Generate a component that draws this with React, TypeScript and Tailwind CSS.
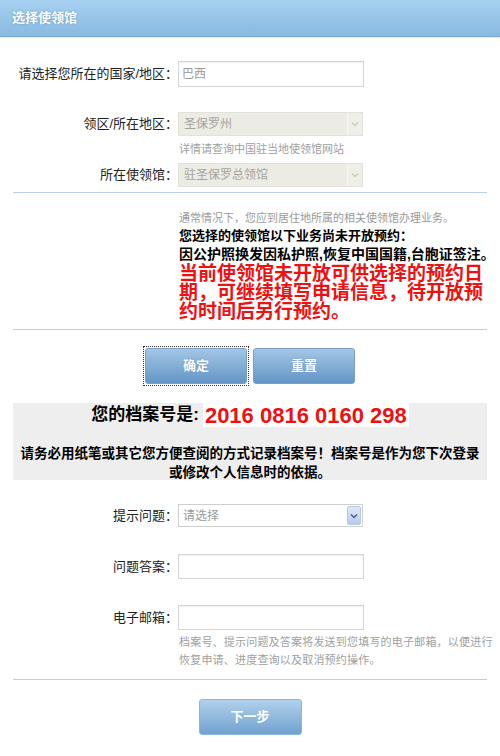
import React from "react";

const cjk = "font-['Liberation_Sans','Noto_Sans_CJK_SC',sans-serif]";

function Chevron({ color }: { color: string }) {
  return (
    <svg width="8" height="6" viewBox="0 0 8 6">
      <path d="M1 1.5 L4 4.5 L7 1.5" fill="none" stroke={color} strokeWidth="1.5" />
    </svg>
  );
}

function Row({ label, children, className = "" }: { label: string; children: React.ReactNode; className?: string }) {
  return (
    <div className={`flex items-center ${className}`}>
      <div className="w-[178px] text-right text-[13px] text-[#222]">{label}</div>
      {children}
    </div>
  );
}

function DisabledSelect({ value }: { value: string }) {
  return (
    <div className="w-[185px] h-[24px] flex items-center bg-[#ecebe4] border border-[#e2e2dc]">
      <span className="flex-1 pl-[5px] text-[12px] text-[#a5a5a0]">{value}</span>
      <div className="w-[15px] h-full flex items-center justify-center border-l border-[#f6f6f2] bg-[#efeee8]">
        <Chevron color="#c9c9c4" />
      </div>
    </div>
  );
}

function Btn({ label, focus = false }: { label: string; focus?: boolean }) {
  return (
    <div className={focus ? "outline-1 outline-dotted outline-[#333] outline-offset-[1px]" : ""}>
      <button className="w-[102px] h-[36px] rounded-[3px] border border-[#789fc6] bg-gradient-to-b from-[#a3c7e5] to-[#6495c6] text-white text-[13px] font-bold [text-shadow:0_0_1px_rgba(40,80,130,0.5)]">
        {label}
      </button>
    </div>
  );
}

export default function App() {
  return (
    <div className={`w-[500px] min-h-[756px] bg-white ${cjk}`}>
      {/* header */}
      <div className="h-[37px] flex items-center pl-[12px] bg-gradient-to-b from-[#a8d2f1] to-[#89b8e0] border-b border-[#80abd6]">
        <span className="text-white text-[13px] font-bold [text-shadow:0_0_2px_rgba(60,110,160,0.6)]">选择使领馆</span>
      </div>
      <div className="h-px bg-[#d6e7f5]" />

      {/* country */}
      <Row label="请选择您所在的国家/地区：" className="mt-[23px]">
        <div className="w-[186px] h-[26px] flex items-center pl-[3px] border border-[#d5d5d5] shadow-[inset_0_1px_1px_rgba(0,0,0,0.06)] text-[12px] text-[#9a9a9a]">
          巴西
        </div>
      </Row>

      <Row label="领区/所在地区：" className="mt-[25px]">
        <DisabledSelect value="圣保罗州" />
      </Row>
      <div className="pl-[179px] mt-[6px] text-[11px] leading-[14px] text-[#a0a0a0]">详情请查询中国驻当地使领馆网站</div>
      <Row label="所在使领馆：" className="mt-[7px]">
        <DisabledSelect value="驻圣保罗总领馆" />
      </Row>

      <div className="mx-[13px] mt-[5px] h-px bg-[#b9d0e8]" />

      {/* notice */}
      <div className="pl-[179px] pr-[6px] mt-[17px]">
        <div className="text-[11px] leading-[16px] text-[#9a9a9a]">通常情况下，您应到居住地所属的相关使领馆办理业务。</div>
        <div className="text-[13px] leading-[19px] font-bold text-black">您选择的使领馆以下业务尚未开放预约：</div>
        <div className="text-[14px] leading-[19px] font-bold text-black whitespace-nowrap">因公护照换发因私护照,恢复中国国籍,台胞证签注。</div>
        <div className="text-[19px] leading-[19px] font-bold text-[#ee1111]">
          当前使领馆未开放可供选择的预约日期，可继续填写申请信息，待开放预约时间后另行预约。
        </div>
      </div>

      <div className="mx-[13px] mt-[8px] h-px bg-[#b9d0e8]" />

      {/* buttons */}
      <div className="mt-[18px] flex justify-center gap-[6px]">
        <Btn label="确定" focus />
        <Btn label="重置" />
      </div>

      {/* file number */}
      <div className="mx-[13px] mt-[19px] h-[77px] bg-[#eeeeee] flex flex-col items-center">
        <div className="h-[24px] flex items-center">
          <span className="text-[17px] font-bold text-black">您的档案号是:</span>
          <span className="ml-[4px] px-[2px] h-[24px] flex items-center bg-white text-[22px] font-bold text-[#ee1111] font-['Liberation_Sans',sans-serif]">
            2016 0816 0160 298
          </span>
        </div>
        <div className="mt-[17px] px-[4px] text-center text-[13.5px] leading-[19px] font-bold text-black">
          请务必用纸笔或其它您方便查阅的方式记录档案号！档案号是作为您下次登录或修改个人信息时的依据。
        </div>
      </div>

      {/* question */}
      <Row label="提示问题：" className="mt-[24px]">
        <div className="w-[185px] h-[23px] flex items-center border border-[#cfcfcf] bg-white">
          <span className="flex-1 pl-[4px] text-[12px] text-[#9a9a9a]">请选择</span>
          <div className="w-[14px] h-[19px] mr-[1px] flex items-center justify-center rounded-[2px] border border-[#b5c9e6] bg-gradient-to-b from-[#dfe9f7] to-[#b5cbec]">
            <Chevron color="#4c5f88" />
          </div>
        </div>
      </Row>
      <Row label="问题答案：" className="mt-[27px]">
        <div className="w-[186px] h-[25px] border border-[#d5d5d5] shadow-[inset_0_1px_1px_rgba(0,0,0,0.06)]" />
      </Row>
      <Row label="电子邮箱：" className="mt-[26px]">
        <div className="w-[186px] h-[25px] border border-[#d5d5d5] shadow-[inset_0_1px_1px_rgba(0,0,0,0.06)]" />
      </Row>
      <div className="pl-[179px] pr-[4px] mt-[3px] text-[11px] leading-[18px] tracking-[0.2px] text-[#a0a0a0]">
        档案号、提示问题及答案将发送到您填写的电子邮箱，以便进行恢复申请、进度查询以及取消预约操作。
      </div>

      <div className="mx-[13px] mt-[10px] h-px bg-[#b9d0e8]" />

      <div className="mt-[19px] flex justify-center">
        <button className="w-[103px] h-[36px] rounded-[3px] border border-[#8fb6da] bg-gradient-to-b from-[#b0d1ec] to-[#72a2cf] text-white text-[13px] font-bold">
          下一步
        </button>
      </div>
    </div>
  );
}
